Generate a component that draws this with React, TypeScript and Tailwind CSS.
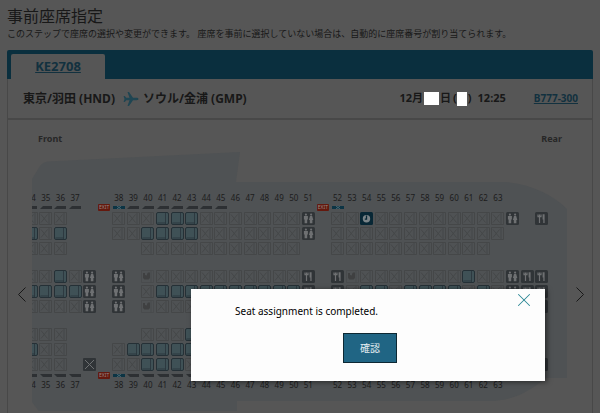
import { X } from "lucide-react";

/*
 * One character per column of the seat map:
 * x taken, a available, L lavatory, G galley, B bassinet, K closed, C chosen, . empty
 */
const CABIN = [
  [
    "xxx...xxxaaaxxxxxxxL.xxCxxxxxxxxxL.G",
    "axa...xxaaaaxxxxxxxL.xxxxxxxxxxxx...",
    "xxx.....xxxxxxxxxxx..xxxxxxxxxxx....",
  ],
  [
    "xxaxL.L.BxxxxxxxxxxG.GBxxxxxxxaxxLGG",
    "aaaaL.L.xaaaaaaaaaaG.GxaaxaaaaxaxLGG",
    "xxxxL.L.BxxxxxxxxxxG.GBxxxxxxxxxxLGG",
  ],
  [
    "xxx.....xxxaxxxxxxx..xxxxxxxxxxx....",
    "axx...xaaaaaxxxxxxxL.xxxxxxxxxxxx...",
    "xxx.K.xxaaaxxxxxxxxL.xxxxxxxxxxxxL.G",
  ],
];

const COLUMNS: (number | null)[] = [
  34, 35, 36, 37, null, null, 38, 39, 40, 41, 42, 43, 44, 45, 46, 47, 48, 49,
  50, 51, null, 52, 53, 54, 55, 56, 57, 58, 59, 60, 61, 62, 63, null, null, null,
];

const EDGE = "wwww.EDwwwwwww......ED..............";

const ROW = "grid grid-cols-[repeat(36,minmax(0,1fr))]";

function Taken() {
  return (
    <svg className="size-[13px]" viewBox="0 0 13 13" fill="none" stroke="#444647" strokeWidth="0.9">
      <path d="M.5 .5h9.500v12H.5zM10 .5h2.500v12H10" />
      <path d="M2 2.500l6.500 8M8.500 2.500l-6.500 8" />
    </svg>
  );
}

function Available({ label }: { label: string }) {
  return (
    <button type="button" aria-label={label} className="block">
      <svg className="size-[13px]" viewBox="0 0 13 13">
        <rect x="0.5" y="0.5" width="12" height="12" rx="1.5" fill="#3f5156" stroke="#253036" />
        <path d="M9.500 1v11M1.500 11h8" stroke="#2b373d" strokeWidth="0.9" />
      </svg>
    </button>
  );
}

function Lavatory() {
  return (
    <svg className="size-[13px]" viewBox="0 0 13 13">
      <rect width="13" height="13" rx="1.5" fill="#303437" />
      <g fill="#6e7072">
        <circle cx="3.900" cy="2.600" r="1.100" />
        <path d="M1.900 4h4v3.500H5.200V11.200H2.600V7.500h-.7z" />
        <circle cx="9.100" cy="2.600" r="1.100" />
        <path d="M8 4h2.200l1.100 4h-.9v3.200H7.800V8h-.9z" />
      </g>
    </svg>
  );
}

function Galley() {
  return (
    <svg className="size-[13px]" viewBox="0 0 13 13">
      <rect width="13" height="13" rx="1.5" fill="#303437" />
      <path d="M3 2.500v2.200h3V2.500M4.500 2.500V11" stroke="#6e7072" strokeWidth="1.2" fill="none" />
      <path d="M7.600 2.300h2V11H8.300V7.500h-.7z" fill="#6e7072" />
    </svg>
  );
}

function Bassinet() {
  return (
    <svg className="size-[13px]" viewBox="0 0 13 13">
      <path d="M.5 .5h9.500v12H.5zM10 .5h2.500v12H10" fill="none" stroke="#484a4b" strokeWidth="0.8" />
      <path d="M2 3h2v2l2 .5V4l1-1.500h2V8L7.500 9.500h-4L2 8z" fill="#3f4041" />
    </svg>
  );
}

function Closed() {
  return (
    <svg className="size-[13px]" viewBox="0 0 13 13">
      <rect width="13" height="13" rx="1" fill="#303437" />
      <path d="M2 2l9 9M11 2l-9 9" stroke="#6e7072" />
    </svg>
  );
}

function Chosen({ label }: { label: string }) {
  return (
    <button type="button" aria-label={label} aria-pressed="true" className="block">
      <svg className="size-[13px]" viewBox="0 0 13 13">
        <rect width="13" height="13" rx="1.5" fill="#082735" />
        <circle cx="6.500" cy="6.700" r="3.700" fill="#7b8488" />
        <path d="M6.500 3.500v3.700H4.800" stroke="#082735" strokeWidth="1.3" fill="none" />
      </svg>
    </button>
  );
}

function Cell({ kind, label }: { kind: string; label: string }) {
  switch (kind) {
    case "x":
      return <Taken />;
    case "a":
      return <Available label={label} />;
    case "L":
      return <Lavatory />;
    case "G":
      return <Galley />;
    case "B":
      return <Bassinet />;
    case "K":
      return <Closed />;
    case "C":
      return <Chosen label={label} />;
    default:
      return null;
  }
}

function Numbers() {
  return (
    <div className={`${ROW} h-3 text-center text-[8px] leading-3 text-[#1c1c1c]`}>
      {COLUMNS.map((n, i) => (
        <span key={i}>{n}</span>
      ))}
    </div>
  );
}

function Edge({ bottom = false }: { bottom?: boolean }) {
  return (
    <div className={`${ROW} h-[7px] items-center justify-items-center`}>
      {EDGE.split("").map((c, i) => (
        <span key={i} className="flex justify-center">
          {c === "w" && (
            <svg className="h-[3px] w-3" viewBox="0 0 12 3">
              <path d={bottom ? "M0 0h12v3H3z" : "M3 0h9v3H0z"} fill="#2d3033" />
            </svg>
          )}
          {c === "D" && (
            <svg className="h-[3px] w-3" viewBox="0 0 12 3">
              <path d="M0 0h12v3H0z" fill="#0c3444" />
              <path d="M4 0l4 3M8 0L4 3" stroke="#4f6b75" strokeWidth="0.9" />
            </svg>
          )}
          {c === "E" && (
            <span className="flex h-[7px] w-3 shrink-0 items-center justify-center rounded-[1px] bg-[#64190e] text-[5px] leading-none text-[#948a86]">
              EXIT
            </span>
          )}
        </span>
      ))}
    </div>
  );
}

function SeatMap() {
  return (
    <div className="relative min-w-0 flex-1 overflow-hidden pb-5 pt-[43px]">
      <svg
        className="absolute inset-x-0 top-0 h-[264px] w-full"
        viewBox="0 0 536 264"
        preserveAspectRatio="none"
        aria-hidden="true"
      >
        <path
          d="M0 30L8 17Q11 13 16 12.500L208 3L204 33H472C500 35 522 47 535 60V229H514C500 240 484 252 456 252H205V264H8L0 253Z"
          fill="#4f5254"
        />
      </svg>
      <div className="relative -ml-2 mr-[19px]">
        <Numbers />
        <Edge />
        <div className="flex flex-col gap-[13px]">
          {CABIN.map((block, b) => (
            <div key={b}>
              {block.map((row, r) => (
                <div key={r} className={`${ROW} h-[15px] items-center justify-items-center`}>
                  {row.split("").map((kind, i) => (
                    <span key={i}>
                      <Cell kind={kind} label={`Seat ${COLUMNS[i]}${"ABCDEFGHJ"[8 - b * 3 - r]}`} />
                    </span>
                  ))}
                </div>
              ))}
            </div>
          ))}
        </div>
        <Edge bottom />
        <Numbers />
      </div>
    </div>
  );
}

export default function App() {
  return (
    <div className="relative h-screen overflow-hidden bg-[#565656] font-['Noto_Sans','Noto_Sans_CJK_JP',sans-serif] text-[#181818]">
      <main className="flex h-full flex-col px-[7px]">
        <header className="pt-1">
          <h1 className="text-[16px] leading-6">事前座席指定</h1>
          <p className="whitespace-nowrap text-[9px] leading-3">
            このステップで座席の選択や変更ができます。 座席を事前に選択していない場合は、自動的に座席番号が割り当てられます。
          </p>
        </header>

        <section className="mt-[10px] flex min-h-0 flex-1 flex-col">
          <nav className="flex h-[29px] items-end rounded-t-[2px] bg-[#0a2f3e] pl-1">
            <a
              href="#flight"
              className="flex h-[25px] w-[94px] items-center justify-center rounded-t-[2px] bg-[#565656] text-[13px] font-bold text-[#12313f] underline"
            >
              KE2708
            </a>
          </nav>

          <div className="flex min-h-0 flex-1 flex-col border-x border-[#484848]">
            <div className="flex h-[41px] shrink-0 items-center border-b-2 border-[#484848] pl-[15px] pr-[14px] text-[11px] font-bold">
              <span className="text-xs">東京/羽田 (HND)</span>
              <svg className="ml-2 mr-1 size-4" viewBox="0 0 16 16" fill="#1f4552" aria-hidden="true">
                <path d="M15.500 8c0-.8-1-1.200-2-1.200H10L6 1H4.500l2 5.800H3.300L1.800 5H.6l.9 3-.9 3h1.200l1.500-1.800h3.200l-2 5.800H6l4-5.800h3.500c1 0 2-.4 2-1.200z" />
              </svg>
              <span className="text-xs">ソウル/金浦 (GMP)</span>
              <p className="ml-auto flex items-center">
                <span>12月</span>
                <span className="mx-px h-[13px] w-[15px] bg-white" />
                <span>日</span>
                <span className="ml-0.5">(</span>
                <span className="h-[14px] w-[10px] bg-white" />
                <span className="ml-px">)</span>
                <span className="ml-1.5">12:25</span>
              </p>
              <a href="#aircraft" className="ml-7 text-[10px] text-[#12313f] underline">
                B777-300
              </a>
            </div>

            <div className="flex shrink-0 justify-between px-[30px] pt-3 text-[9px] font-bold leading-[14px] text-[#272727]">
              <span>Front</span>
              <span>Rear</span>
            </div>

            <div className="mt-[3px] flex">
              <button
                type="button"
                aria-label="Previous rows"
                className="flex w-6 shrink-0 items-center justify-center pl-1 pt-7"
              >
                <svg className="h-[15px] w-2" viewBox="0 0 8 15" fill="none" stroke="currentColor">
                  <path d="M7.500 .5l-7 7 7 7" />
                </svg>
              </button>
              <SeatMap />
              <button
                type="button"
                aria-label="Next rows"
                className="flex w-6 shrink-0 items-center justify-center pt-7"
              >
                <svg className="h-[15px] w-2" viewBox="0 0 8 15" fill="none" stroke="currentColor">
                  <path d="M.5 .5l7 7-7 7" />
                </svg>
              </button>
            </div>
          </div>
        </section>
      </main>

      <div
        role="dialog"
        aria-modal="true"
        aria-labelledby="message"
        className="absolute bottom-8 left-[191px] right-[55px] flex h-[92px] flex-col items-center bg-[#fdfdfd] pl-1 shadow-[2px_1px_5px_rgba(0,0,0,0.5)]"
      >
        <button type="button" aria-label="Close" className="absolute right-[10px] top-0 text-[#2b8795]">
          <X className="size-[22px]" strokeWidth={1.1} />
        </button>
        <p id="message" className="w-full pl-10 pt-[14px] text-[10px] leading-4 text-black">
          Seat assignment is completed.
        </p>
        <button
          type="button"
          className="mt-[14px] h-[30px] w-[54px] border border-[#0d2833] bg-[#206584] text-[10px] text-[#e4edf1]"
        >
          確認
        </button>
      </div>
    </div>
  );
}
